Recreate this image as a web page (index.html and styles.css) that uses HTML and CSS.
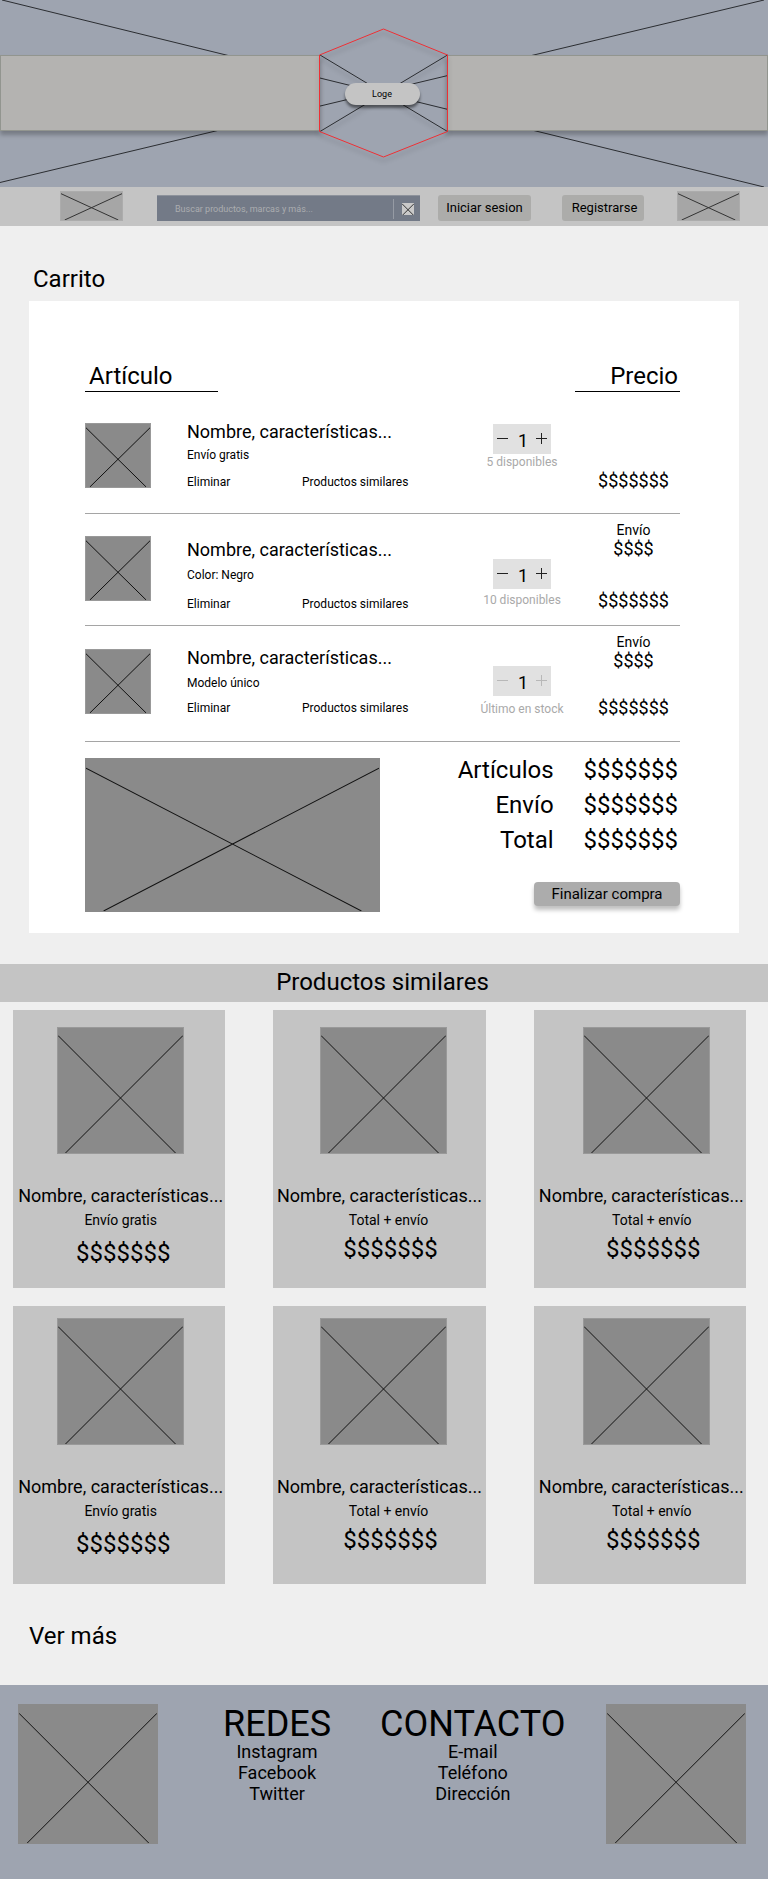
FILE: index.html
```html
<!DOCTYPE html>
<html lang="es">
<head>
<meta charset="utf-8">
<meta name="viewport" content="width=device-width, initial-scale=1">
<title>Carrito</title>
<link rel="stylesheet" href="styles.css">
</head>
<body>
<svg class="defs" aria-hidden="true">
  <symbol id="cross" viewBox="0 0 100 100" preserveAspectRatio="none">
    <path d="M0 6L94 100M100 6L6 100" fill="none" stroke="currentColor" vector-effect="non-scaling-stroke"/>
  </symbol>
</svg>

<header>
  <div class="hero">
    <svg class="hero-art" viewBox="0 0 768 187" preserveAspectRatio="none" aria-hidden="true">
      <path class="ray" d="M2 0L764 187M0 182.500L764 0"/>
      <g class="shadow">
        <rect class="band" x=".5" y="55.500" width="319" height="75"/>
        <rect class="band" x="447.500" y="55.500" width="320" height="75"/>
      </g>
      <g class="shadow">
        <path class="ray" d="M320 55L447.500 131.500M447.500 55L320 131.500"/>
        <path class="hexagon" d="M383.500 29L447.500 55V131.500L383.500 157L319.500 131.500V55Z"/>
      </g>
    </svg>
    <a class="logo" href="#">Loge</a>
  </div>
  <nav class="nav">
    <a class="nav-pic" href="#" aria-label="Inicio"><svg class="pic"><use href="#cross"/></svg></a>
    <form class="search" role="search">
      <input class="search-input" type="text" aria-label="Buscar" placeholder="Buscar productos, marcas y más...">
      <button class="search-button" type="button" aria-label="Buscar"><svg class="search-icon"><use href="#cross"/></svg></button>
    </form>
    <button class="nav-button login" type="button">Iniciar sesion</button>
    <button class="nav-button register" type="button">Registrarse</button>
    <a class="nav-pic last" href="#" aria-label="Mi carrito"><svg class="pic"><use href="#cross"/></svg></a>
  </nav>
</header>

<main>
  <h1 class="title">Carrito</h1>
  <section class="cart">
    <div class="cart-head">
      <h2 class="head-item">Artículo</h2>
      <h2 class="head-price">Precio</h2>
    </div>

    <article class="item item-free">
      <svg class="pic thumb"><use href="#cross"/></svg>
      <div class="info">
        <h3 class="name">Nombre, características...</h3>
        <p class="detail">Envío gratis</p>
        <div class="actions"><a href="#">Eliminar</a><a href="#">Productos similares</a></div>
      </div>
      <div class="quantity">
        <div class="stepper">
          <button class="step" type="button" aria-label="Menos"><svg class="step-icon" viewBox="0 0 11 11"><path d="M0 5.500H11"/></svg></button>
          <input class="count" type="text" value="1" aria-label="Cantidad">
          <button class="step" type="button" aria-label="Más"><svg class="step-icon" viewBox="0 0 11 11"><path d="M0 5.500H11M5.500 0V11"/></svg></button>
        </div>
        <p class="stock">5 disponibles</p>
      </div>
      <div class="price"><p class="amount">$$$$$$$</p></div>
    </article>

    <article class="item item-color">
      <svg class="pic thumb"><use href="#cross"/></svg>
      <div class="info">
        <h3 class="name">Nombre, características...</h3>
        <p class="detail">Color: Negro</p>
        <div class="actions"><a href="#">Eliminar</a><a href="#">Productos similares</a></div>
      </div>
      <div class="quantity">
        <div class="stepper">
          <button class="step" type="button" aria-label="Menos"><svg class="step-icon" viewBox="0 0 11 11"><path d="M0 5.500H11"/></svg></button>
          <input class="count" type="text" value="1" aria-label="Cantidad">
          <button class="step" type="button" aria-label="Más"><svg class="step-icon" viewBox="0 0 11 11"><path d="M0 5.500H11M5.500 0V11"/></svg></button>
        </div>
        <p class="stock">10 disponibles</p>
      </div>
      <div class="price">
        <div class="shipping"><p class="shipping-label">Envío</p><p>$$$$</p></div>
        <p class="amount">$$$$$$$</p>
      </div>
    </article>

    <article class="item item-unique">
      <svg class="pic thumb"><use href="#cross"/></svg>
      <div class="info">
        <h3 class="name">Nombre, características...</h3>
        <p class="detail">Modelo único</p>
        <div class="actions"><a href="#">Eliminar</a><a href="#">Productos similares</a></div>
      </div>
      <div class="quantity">
        <div class="stepper">
          <button class="step" type="button" aria-label="Menos" disabled><svg class="step-icon" viewBox="0 0 11 11"><path d="M0 5.500H11"/></svg></button>
          <input class="count" type="text" value="1" aria-label="Cantidad">
          <button class="step" type="button" aria-label="Más" disabled><svg class="step-icon" viewBox="0 0 11 11"><path d="M0 5.500H11M5.500 0V11"/></svg></button>
        </div>
        <p class="stock">Último en stock</p>
      </div>
      <div class="price">
        <div class="shipping"><p class="shipping-label">Envío</p><p>$$$$</p></div>
        <p class="amount">$$$$$$$</p>
      </div>
    </article>

    <div class="summary">
      <svg class="pic summary-pic"><use href="#cross"/></svg>
      <div class="summary-side">
        <dl class="totals">
          <dt>Artículos</dt><dd>$$$$$$$</dd>
          <dt>Envío</dt><dd>$$$$$$$</dd>
          <dt>Total</dt><dd>$$$$$$$</dd>
        </dl>
        <button class="checkout" type="button">Finalizar compra</button>
      </div>
    </div>
  </section>

  <h2 class="similar-title">Productos similares</h2>
  <section class="products">
    <article class="card">
      <svg class="pic card-pic"><use href="#cross"/></svg>
      <h3 class="name">Nombre, características...</h3>
      <p class="card-note">Envío gratis</p>
      <p class="card-price">$$$$$$$</p>
    </article>
    <article class="card">
      <svg class="pic card-pic"><use href="#cross"/></svg>
      <h3 class="name">Nombre, características...</h3>
      <p class="card-note">Total + envío</p>
      <p class="card-price">$$$$$$$</p>
    </article>
    <article class="card">
      <svg class="pic card-pic"><use href="#cross"/></svg>
      <h3 class="name">Nombre, características...</h3>
      <p class="card-note">Total + envío</p>
      <p class="card-price">$$$$$$$</p>
    </article>
  </section>
  <section class="products compact">
    <article class="card">
      <svg class="pic card-pic"><use href="#cross"/></svg>
      <h3 class="name">Nombre, características...</h3>
      <p class="card-note">Envío gratis</p>
      <p class="card-price">$$$$$$$</p>
    </article>
    <article class="card">
      <svg class="pic card-pic"><use href="#cross"/></svg>
      <h3 class="name">Nombre, características...</h3>
      <p class="card-note">Total + envío</p>
      <p class="card-price">$$$$$$$</p>
    </article>
    <article class="card">
      <svg class="pic card-pic"><use href="#cross"/></svg>
      <h3 class="name">Nombre, características...</h3>
      <p class="card-note">Total + envío</p>
      <p class="card-price">$$$$$$$</p>
    </article>
  </section>
  <a class="more" href="#">Ver más</a>
</main>

<footer class="footer">
  <svg class="pic footer-pic"><use href="#cross"/></svg>
  <section class="links">
    <h2 class="links-title">REDES</h2>
    <a href="#">Instagram</a>
    <a href="#">Facebook</a>
    <a href="#">Twitter</a>
  </section>
  <section class="links contact">
    <h2 class="links-title">CONTACTO</h2>
    <a href="#">E-mail</a>
    <a href="#">Teléfono</a>
    <a href="#">Dirección</a>
  </section>
  <svg class="pic footer-pic end"><use href="#cross"/></svg>
</footer>
</body>
</html>
```
FILE: styles.css
```css
* { box-sizing: border-box; margin: 0; padding: 0; }

body {
  background: #efefef;
  color: #000;
  font: 400 18px/21px Roboto, "Liberation Sans", sans-serif;
}

h1, h2, h3 { font-weight: 400; }
a { color: inherit; text-decoration: none; }
button, input { font-family: inherit; color: inherit; border: 0; background: none; }
svg { display: block; }
.defs { position: absolute; width: 0; height: 0; }
.pic { background: #8a8a8a; border: 1px solid #999; color: #111; flex: none; }

/* Banner */
.hero { display: grid; align-items: center; justify-items: center; background: #9ea4b0; }
.hero > * { grid-area: 1 / 1; }
.hero-art { width: 100%; height: 187px; }
.ray { fill: none; stroke: #2b2d31; }
.band { fill: #b4b3b1; stroke: #92958f; }
.hexagon { fill: none; stroke: #ee2f34; }
.shadow { filter: drop-shadow(0 4px 2px rgba(0, 0, 0, .25)); }
.logo {
  width: 75px;
  margin-right: 4px;
  border-radius: 12px;
  background: #c4c4c4;
  box-shadow: 0 3px 3px rgba(0, 0, 0, .5);
  font-size: 9px;
  line-height: 22px;
  text-align: center;
}

/* Navigation */
.nav {
  display: flex;
  align-items: flex-end;
  height: 39px;
  padding: 0 28px 5px 60px;
  background: #c4c4c4;
}
.nav-pic { flex: none; width: 63px; margin-right: 34px; }
.nav-pic .pic { width: 100%; height: 30px; background: #a6a6a6; border-color: #acacac; color: #333; }
.nav-pic.last { margin: 0 0 0 33px; }
.search {
  flex: 1;
  display: flex;
  align-items: center;
  min-width: 0;
  height: 26px;
  background: #737a87;
  border-top: 1px solid #8d929b;
}
.search-input { flex: 1; min-width: 0; height: 25px; padding: 0 18px; font-size: 9px; }
.search-input::placeholder { color: #abadb0; opacity: 1; }
.search-button {
  display: flex;
  align-items: center;
  height: 20px;
  padding: 0 6px 0 8px;
  border-left: 1px solid #969ba4;
}
.search-icon { width: 12px; height: 12px; background: #c9c9c9; color: #333; }
.nav-button { flex: none; height: 26px; border-radius: 3px; background: #acacaa; font-size: 13px; line-height: 16px; }
.login { width: 93px; margin: 0 31px 0 18px; }
.register { width: 82px; padding-left: 3px; }

/* Cart */
.title { padding: 39px 33px 8px; font-size: 24px; line-height: 28px; }
.cart { margin: 0 29px; padding: 61px 59px 21px 56px; background: #fff; }
.cart-head { display: flex; justify-content: space-between; font-size: 24px; line-height: 28px; }
.cart-head h2 { border-bottom: 1px solid #000; font-size: inherit; padding-bottom: 1px; }
.head-item { width: 133px; padding-left: 4px; }
.head-price { width: 105px; padding-right: 2px; text-align: right; }

.item {
  display: grid;
  grid-template-columns: 66px minmax(0, 1fr) 96px 93px;
  border-bottom: 1px solid #a5a5a5;
}
.thumb { width: 66px; height: 65px; }
.name { font-size: 18px; line-height: 21px; white-space: nowrap; }
.info { padding-left: 36px; font-size: 12px; line-height: 14px; }
.actions { display: grid; grid-template-columns: 115px auto; }
.quantity { width: 96px; justify-self: end; margin-right: 17px; text-align: center; }
.stepper {
  display: grid;
  grid-template-columns: 19px 20px 19px;
  width: 58px;
  height: 30px;
  margin: 0 auto;
  background: #e1e1e1;
}
.step { display: grid; place-items: center; padding-bottom: 1px; }
.step-icon { width: 11px; height: 11px; fill: none; stroke: #222; }
.step:disabled .step-icon { stroke: #b8b8b8; }
.count { width: 20px; padding: 3px 0 0 2px; text-align: center; font-size: 18px; line-height: 27px; }
.stock { color: #a9a9a9; font-size: 12px; line-height: 14px; white-space: nowrap; }
.price { display: flex; flex-direction: column; text-align: center; }
.shipping-label { font-size: 14px; line-height: 16px; }
.amount { margin-top: auto; }

.item-free { min-height: 122px; }
.item-free .thumb { margin-top: 31px; }
.item-free .info { padding-top: 29px; }
.item-free .detail { margin: 6px 0 13px; }
.item-free .quantity { padding-top: 32px; }
.item-free .stock { margin-top: 1px; }
.item-free .price { padding-bottom: 22px; }

.item-color { min-height: 112px; }
.item-color .thumb { margin-top: 22px; }
.item-color .info { padding-top: 25px; }
.item-color .detail { margin: 8px 0 15px; }
.item-color .quantity { padding-top: 45px; }
.item-color .stock { margin-top: 4px; }
.item-color .price { padding: 8px 0 14px; }

.item-unique { min-height: 116px; }
.item-unique .thumb { margin-top: 23px; }
.item-unique .info { padding-top: 21px; }
.item-unique .detail { margin: 8px 0 11px; }
.item-unique .quantity { padding-top: 40px; }
.item-unique .stock { margin-top: 6px; }
.item-unique .price { padding: 8px 0 23px; }

.summary { display: flex; justify-content: space-between; padding-top: 16px; }
.summary-pic { flex: 0 1 295px; width: 295px; height: 154px; border-color: #8a8a8a; }
.summary-side { display: flex; flex-direction: column; align-items: flex-end; margin-top: -2px; }
.totals {
  display: grid;
  grid-template-columns: auto auto;
  gap: 7px 30px;
  padding-right: 2px;
  font-size: 24px;
  line-height: 28px;
  text-align: right;
}
.checkout {
  width: 146px;
  height: 24px;
  margin-top: 28px;
  border-radius: 4px;
  background: #acacac;
  box-shadow: 0 4px 4px rgba(0, 0, 0, .25);
  font-size: 15px;
  line-height: 18px;
}

/* Similar products */
.similar-title {
  margin: 31px 0 8px;
  padding: 4px 3px 6px 0;
  background: #c4c4c4;
  font-size: 24px;
  line-height: 28px;
  text-align: center;
}
.products {
  display: grid;
  grid-template-columns: repeat(3, minmax(0, 1fr));
  gap: 48px;
  padding: 0 22px 0 13px;
}
.card {
  --pic-shift: 3px;
  --name-shift: 3px;
  --note-shift: 3px;
  --price-shift: 8px;
  min-height: 278px;
  padding-top: 17px;
  background: #c4c4c4;
  text-align: center;
}
.card:nth-child(2) { --pic-shift: 9px; --name-shift: 0px; --note-shift: 18px; --price-shift: 22px; }
.card:nth-child(3) { --pic-shift: 14px; --note-shift: 24px; --price-shift: 27px; }
.card-pic { width: 127px; height: 127px; margin: 0 0 31px calc((100% - 127px + var(--pic-shift)) / 2); }
.card .name { padding-left: var(--name-shift); }
.card-note { margin: 6px 0 11px; padding-left: var(--note-shift); font-size: 14px; line-height: 16px; }
.card + .card .card-note { margin-bottom: 7px; }
.card-price { padding-left: var(--price-shift); font-size: 24px; line-height: 28px; }
.compact { margin-top: 18px; }
.compact .card { padding-top: 12px; }
.more { display: block; padding: 38px 29px 35px; font-size: 24px; line-height: 28px; }

/* Footer */
.footer { display: flex; align-items: flex-start; padding: 19px 22px 35px 18px; background: #9ea4b0; }
.footer-pic { width: 140px; height: 140px; border-color: #8a8a8a; }
.links { display: flex; flex-direction: column; align-items: center; margin-left: 65px; padding-top: 4px; }
.links-title { font-size: 36px; line-height: 33px; }
.contact { margin-left: 49px; }
.end { margin-left: auto; }
```
